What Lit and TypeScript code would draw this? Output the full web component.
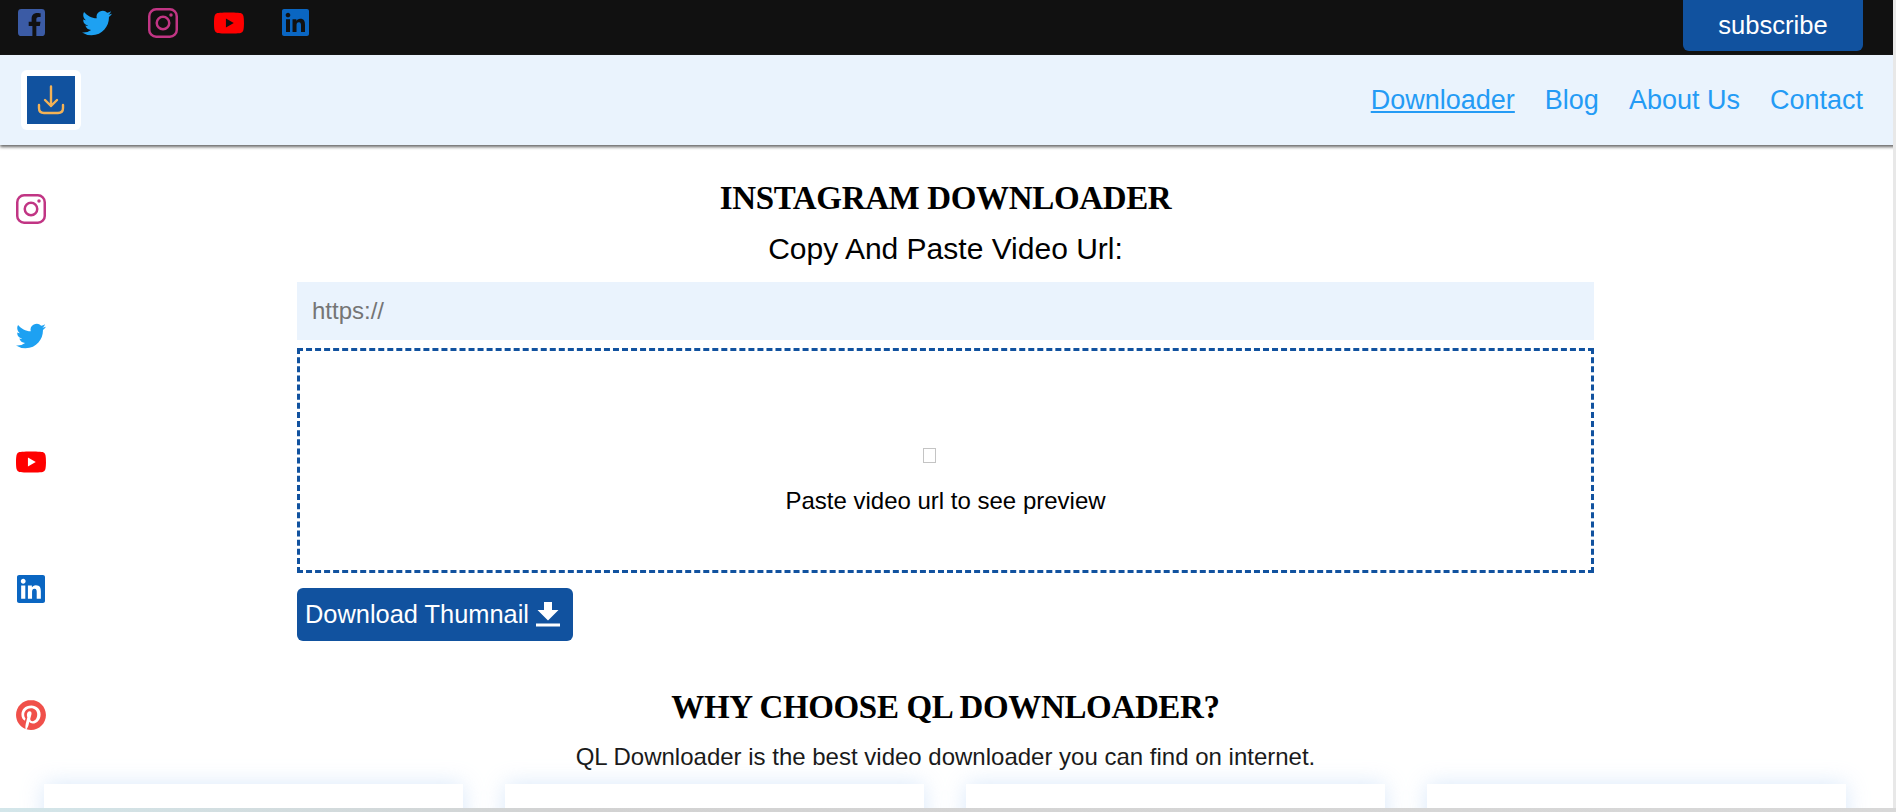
import { LitElement, html, css, svg } from 'lit';
import { customElement } from 'lit/decorators.js';

const twitter = svg`<path fill="#1da1f2" d="M23.953 4.57a10 10 0 01-2.825.775 4.958 4.958 0 002.163-2.723c-.951.555-2.005.959-3.127 1.184a4.92 4.92 0 00-8.384 4.482C7.69 8.095 4.067 6.13 1.64 3.162a4.822 4.822 0 00-.666 2.475c0 1.71.87 3.213 2.188 4.096a4.904 4.904 0 01-2.228-.616v.06a4.923 4.923 0 003.946 4.827 4.996 4.996 0 01-2.212.085 4.936 4.936 0 004.604 3.417 9.867 9.867 0 01-6.102 2.105c-.39 0-.779-.023-1.17-.067a13.995 13.995 0 007.557 2.209c9.053 0 13.998-7.496 13.998-13.985 0-.21 0-.42-.015-.63A9.935 9.935 0 0024 4.59z"/>`;
const youtube = svg`<path fill="#ff0000" d="M23.498 6.186a3.016 3.016 0 0 0-2.122-2.136C19.505 3.545 12 3.545 12 3.545s-7.505 0-9.377.505A3.017 3.017 0 0 0 .502 6.186C0 8.07 0 12 0 12s0 3.93.502 5.814a3.016 3.016 0 0 0 2.122 2.136c1.871.505 9.376.505 9.376.505s7.505 0 9.377-.505a3.015 3.015 0 0 0 2.122-2.136C24 15.93 24 12 24 12s0-3.93-.502-5.814zM9.545 15.568V8.432L15.818 12l-6.273 3.568z"/>`;
const linkedin = svg`<path fill="#0a66c2" d="M20.447 20.452h-3.554v-5.569c0-1.328-.027-3.037-1.852-3.037-1.853 0-2.136 1.445-2.136 2.939v5.667H9.351V9h3.414v1.561h.046c.477-.9 1.637-1.85 3.37-1.85 3.601 0 4.267 2.37 4.267 5.455v6.286zM5.337 7.433c-1.144 0-2.063-.926-2.063-2.065 0-1.138.92-2.063 2.063-2.063 1.14 0 2.064.925 2.064 2.063 0 1.139-.925 2.065-2.064 2.065zm1.782 13.019H3.555V9h3.564v11.452zM22.225 0H1.771C.792 0 0 .774 0 1.729v20.542C0 23.227.792 24 1.771 24h20.451C23.2 24 24 23.227 24 22.271V1.729C24 .774 23.2 0 22.222 0h.003z"/>`;
const instagram = svg`<g fill="none" stroke="#c13584" stroke-width="2"><rect x="1" y="1" width="22" height="22" rx="5.5"/><circle cx="12" cy="12" r="5"/></g><circle cx="18.4" cy="5.6" r="1.4" fill="#c13584"/>`;
const facebook = svg`<path fill="#3b5ba5" d="M3 0h18a3 3 0 0 1 3 3v18a3 3 0 0 1-3 3h-4.7v-9h3.1l.6-3.7h-3.7V9c0-1.1.5-2 2.1-2h1.7V3.8s-1.5-.3-3-.3c-3.100 0-5 1.900-5 5.100v2.700H9.500V15h3.300v9H3a3 3 0 0 1-3-3V3a3 3 0 0 1 3-3z"/>`;
const pinterest = svg`<path fill="#f0504a" d="M12.017 0C5.396 0 .029 5.367.029 11.987c0 5.079 3.158 9.417 7.618 11.162-.105-.949-.199-2.403.041-3.439.219-.937 1.406-5.957 1.406-5.957s-.359-.72-.359-1.781c0-1.663.967-2.911 2.168-2.911 1.024 0 1.518.769 1.518 1.688 0 1.029-.653 2.567-.992 3.992-.285 1.193.6 2.165 1.775 2.165 2.128 0 3.768-2.245 3.768-5.487 0-2.861-2.063-4.869-5.008-4.869-3.41 0-5.409 2.562-5.409 5.199 0 1.033.394 2.143.889 2.741.099.12.112.225.085.345-.09.375-.293 1.199-.334 1.363-.053.225-.172.271-.401.165-1.495-.69-2.433-2.878-2.433-4.646 0-3.776 2.748-7.252 7.92-7.252 4.158 0 7.392 2.967 7.392 6.923 0 4.135-2.607 7.462-6.233 7.462-1.214 0-2.354-.629-2.758-1.379l-.749 2.848c-.269 1.045-1.004 2.352-1.498 3.146 1.123.345 2.306.535 3.55.535 6.607 0 11.985-5.365 11.985-11.987C23.97 5.39 18.592.026 11.985.026L12.017 0z"/>`;

const icon = (body: unknown, size = 30) =>
  html`<svg class="icon" width=${size} height=${size} viewBox="0 0 24 24">${body}</svg>`;

@customElement('app-root')
export class AppRoot extends LitElement {
  render() {
    return html`
      <div class="page">
        <div class="topbar">
          <div class="socials">
            <a>${icon(facebook, 27)}</a>
            <a>${icon(twitter)}</a>
            <a>${icon(instagram)}</a>
            <a>${icon(youtube)}</a>
            <a>${icon(linkedin, 27)}</a>
          </div>
          <button class="subscribe">subscribe</button>
        </div>
        <header class="nav">
          <div class="logo">
            <div class="logo-inner">
              <svg width="30" height="30" viewBox="0 0 30 30" fill="none" stroke="#f4b256" stroke-width="2.400" stroke-linecap="round" stroke-linejoin="round">
                <path d="M15 1.500V21M9 15l6 6 6-6"/>
                <path d="M3 20v3c0 3 2 5 5 5h14c3 0 5-2 5-5v-3"/>
              </svg>
            </div>
          </div>
          <nav class="links">
            <a class="active">Downloader</a>
            <a>Blog</a>
            <a>About Us</a>
            <a>Contact</a>
          </nav>
        </header>

        <aside class="side">
          <a>${icon(instagram)}</a>
          <a>${icon(twitter)}</a>
          <a>${icon(youtube)}</a>
          <a>${icon(linkedin, 28)}</a>
          <a>${icon(pinterest)}</a>
        </aside>

        <main class="main">
          <h1>INSTAGRAM DOWNLOADER</h1>
          <div class="label">Copy And Paste Video Url:</div>
          <input class="url" placeholder="https://" />
          <div class="preview">
            <span class="broken"></span>
            <p>Paste video url to see preview</p>
          </div>
          <button class="download">
            Download Thumnail
            <svg width="24" height="25" viewBox="0 0 24 25" fill="#fff">
              <path d="M8 0h8v8h6.500L12 18.500 1.500 8H8z"/>
              <rect x="0" y="21.500" width="24" height="3"/>
            </svg>
          </button>
          <h2>WHY CHOOSE QL DOWNLOADER?</h2>
          <p class="lead">QL Downloader is the best video downloader you can find on internet.</p>
        </main>

        <section class="cards">
          <div class="card"></div>
          <div class="card"></div>
          <div class="card"></div>
          <div class="card"></div>
        </section>

        <div class="edge-right"></div>
        <div class="edge-bottom"></div>
      </div>
    `;
  }

  static styles = css`
    :host {
      display: block;
      font-family: 'Liberation Sans', Arial, sans-serif;
      color: #000;
    }
    .page {
      position: relative;
      height: 812px;
      overflow: hidden;
      background: #fff;
    }
    .topbar {
      display: flex;
      justify-content: space-between;
      height: 55px;
      padding: 0 33px 0 16px;
      background: #111;
    }
    .socials {
      display: flex;
      gap: 36px;
      height: 45px;
      align-items: center;
    }
    .socials a {
      display: flex;
      width: 30px;
      justify-content: center;
    }
    .icon {
      display: block;
    }
    .subscribe {
      width: 180px;
      height: 51px;
      border: none;
      border-radius: 0 0 6px 6px;
      background: #11529f;
      color: #fff;
      font: 25.6px 'Liberation Sans', Arial, sans-serif;
    }
    .nav {
      display: flex;
      align-items: center;
      justify-content: space-between;
      height: 90px;
      padding: 0 33px 0 21px;
      background: #eaf3fd;
      box-shadow: 0 2px 3px #666;
      position: relative;
    }
    .logo {
      display: flex;
      align-items: center;
      justify-content: center;
      width: 60px;
      height: 60px;
      border-radius: 6px;
      background: #fff;
    }
    .logo-inner {
      display: flex;
      align-items: center;
      justify-content: center;
      width: 48px;
      height: 48px;
      background: #11529f;
    }
    .links {
      display: flex;
      gap: 30px;
      font-size: 27px;
      color: #249bf5;
    }
    .links .active {
      text-decoration: underline;
    }
    .side {
      position: absolute;
      left: 16px;
      top: 194px;
      display: flex;
      flex-direction: column;
      gap: 96.5px;
    }
    .side a {
      display: flex;
      align-items: center;
      justify-content: center;
      width: 30px;
      height: 30px;
    }
    .main {
      display: flex;
      flex-direction: column;
      width: 1297px;
      margin-left: 297px;
      padding-top: 33px;
    }
    h1,
    h2 {
      margin: 0;
      text-align: center;
      font-family: 'Liberation Serif', Cambria, serif;
      font-size: 33px;
      font-weight: 700;
      line-height: 40px;
      letter-spacing: -0.35px;
    }
    .label {
      margin-top: 15px;
      text-align: center;
      font-size: 30px;
      line-height: 32px;
    }
    .url {
      box-sizing: border-box;
      width: 100%;
      height: 58px;
      margin-top: 17px;
      padding: 0 15px;
      border: none;
      background: #eaf3fd;
      font: 24px 'Liberation Sans', Arial, sans-serif;
    }
    .url::placeholder {
      color: #757575;
    }
    .preview {
      box-sizing: border-box;
      display: flex;
      flex-direction: column;
      align-items: center;
      height: 225px;
      margin-top: 8px;
      padding-top: 97px;
      border: 3px dashed #11529f;
    }
    .broken {
      box-sizing: border-box;
      width: 13px;
      height: 15px;
      margin-right: 33px;
      border: 1px solid #c4c4c4;
    }
    .preview p {
      margin: 24px 0 0;
      font-size: 24px;
      line-height: 28px;
    }
    .download {
      display: flex;
      align-items: center;
      gap: 7px;
      width: 276px;
      height: 53px;
      margin-top: 15px;
      padding: 0 0 0 8px;
      border: none;
      border-radius: 6px;
      background: #11529f;
      color: #fff;
      font: 25.4px 'Liberation Sans', Arial, sans-serif;
    }
    h2 {
      margin-top: 46px;
    }
    .lead {
      margin: 16px 0 0;
      text-align: center;
      font-size: 24px;
      line-height: 28px;
      color: #1a1a1a;
    }
    .cards {
      position: absolute;
      left: 44px;
      top: 784px;
      display: flex;
      gap: 42px;
    }
    .card {
      width: 419px;
      height: 60px;
      background: #fff;
      box-shadow: 0 0 22px rgba(170, 205, 245, 0.45);
    }
    .edge-right {
      position: absolute;
      top: 0;
      right: 0;
      bottom: 0;
      width: 3px;
      background: #e8e8e8;
    }
    .edge-bottom {
      position: absolute;
      left: 0;
      right: 0;
      bottom: 0;
      height: 4px;
      background: linear-gradient(90deg, #d3e6ea, #d2d2d2 30%, #d8d8d8);
    }
  `;
}
